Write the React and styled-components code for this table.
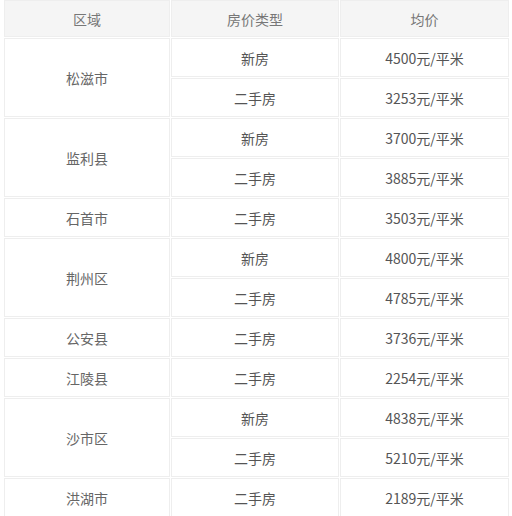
import React from "react";
import styled, { createGlobalStyle } from "styled-components";

const GlobalStyle = createGlobalStyle`
  body {
    margin: 0;
    background: #fff;
    font-family: "Noto Sans CJK SC", "Noto Sans", sans-serif;
  }
`;

const Table = styled.table`
  margin: -1px 0 0 3px;
  width: 507px;
  border-collapse: separate;
  border-spacing: 1px;
  table-layout: fixed;
  font-size: 14px;
  color: #555;
`;

const Head = styled.th`
  height: 35px;
  padding: 0;
  background: #f5f5f5;
  border: 1px solid #eee;
  font-weight: normal;
  color: #777;
`;

const Cell = styled.td`
  height: 37px;
  padding: 0;
  text-align: center;
  border: 1px solid #eee;
  color: ${({ $muted }) => ($muted ? "#666" : "#555")};
`;

const data = [
  { area: "松滋市", rows: [["新房", "4500"], ["二手房", "3253"]] },
  { area: "监利县", rows: [["新房", "3700"], ["二手房", "3885"]] },
  { area: "石首市", rows: [["二手房", "3503"]] },
  { area: "荆州区", rows: [["新房", "4800"], ["二手房", "4785"]] },
  { area: "公安县", rows: [["二手房", "3736"]] },
  { area: "江陵县", rows: [["二手房", "2254"]] },
  { area: "沙市区", rows: [["新房", "4838"], ["二手房", "5210"]] },
  { area: "洪湖市", rows: [["二手房", "2189"]] },
];

export default function App() {
  return (
    <>
      <GlobalStyle />
      <Table>
        <colgroup>
          <col style={{ width: "166px" }} />
          <col style={{ width: "168px" }} />
          <col />
        </colgroup>
        <thead>
          <tr>
            <Head>区域</Head>
            <Head>房价类型</Head>
            <Head>均价</Head>
          </tr>
        </thead>
        <tbody>
          {data.map((group) =>
            group.rows.map(([type, price], i) => (
              <tr key={group.area + type}>
                {i === 0 && (
                  <Cell $muted rowSpan={group.rows.length}>
                    {group.area}
                  </Cell>
                )}
                <Cell>{type}</Cell>
                <Cell>{price}元/平米</Cell>
              </tr>
            ))
          )}
        </tbody>
      </Table>
    </>
  );
}
